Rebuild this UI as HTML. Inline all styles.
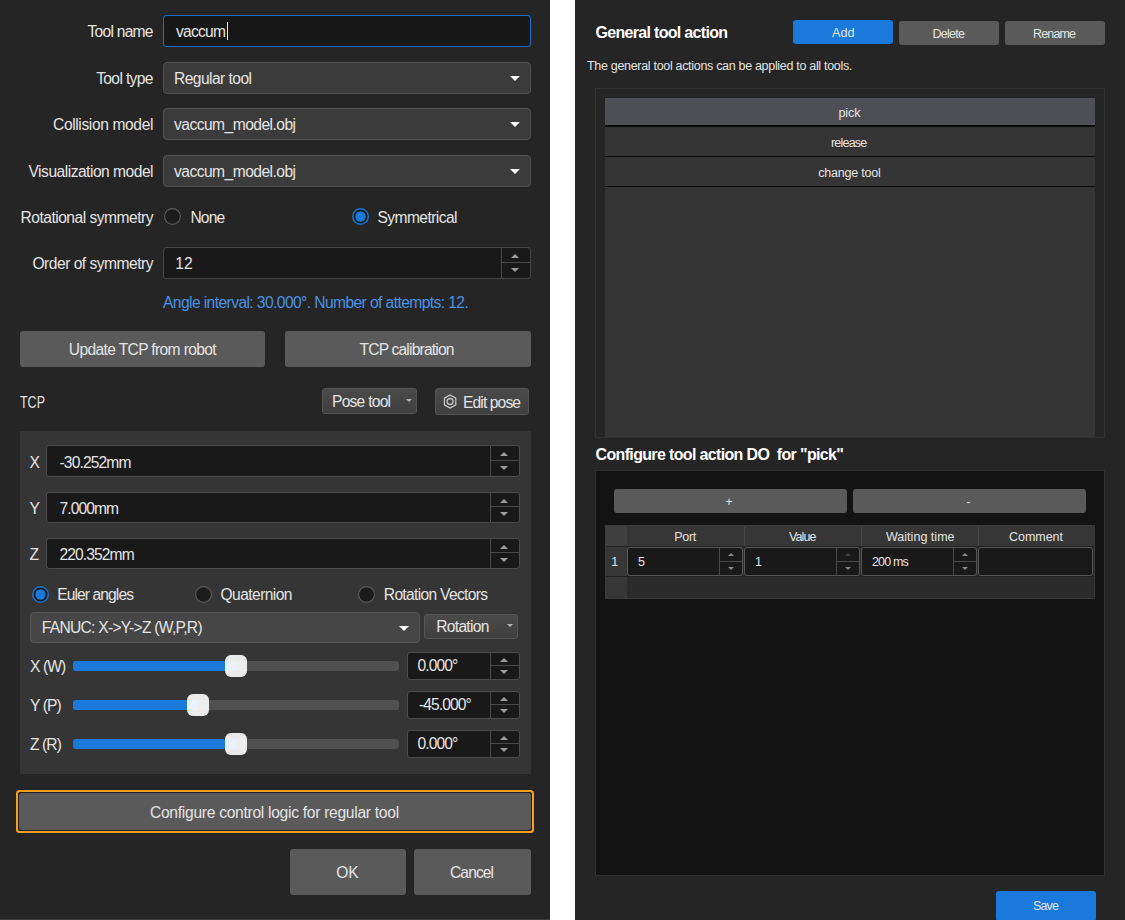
<!DOCTYPE html>
<html lang="en">
<head>
<meta charset="utf-8">
<title>Tool configuration</title>
<style>
*{box-sizing:border-box;margin:0;padding:0}
html,body{width:1125px;height:920px;overflow:hidden;background:#fff}
body{position:relative;font-family:"Liberation Sans",sans-serif;font-size:14px;color:#e4e4e4}
.panel{position:absolute;top:0;background:#252525;overflow:hidden}
#left{left:0;width:550px;height:920px}
#right{left:575px;width:550px;height:920px}
.abs{position:absolute}
.lbl{position:absolute;white-space:pre;height:20px;line-height:20px}
.r{text-align:right}
.input{position:absolute;background:#191919;border:1px solid #464646;border-radius:3px}
.input .t{position:absolute;left:0;top:0;bottom:0;display:flex;align-items:center;white-space:nowrap}
.combo{position:absolute;background:#3b3b3b;border:1px solid #525252;border-radius:4px}
.combo .t{position:absolute;left:10px;top:0;bottom:0;display:flex;align-items:center;white-space:nowrap}
.arrow{position:absolute;width:0;height:0;border-left:5px solid transparent;border-right:5px solid transparent;border-top:5px solid #fff}
.sarrow{position:absolute;width:0;height:0;border-left:3.5px solid transparent;border-right:3.5px solid transparent;border-top:3.5px solid #b4b4b4}
.btn{position:absolute;background:#5a5a5a;border-radius:3px;display:flex;align-items:center;justify-content:center;white-space:nowrap;color:#f2f2f2}
.btn.blue{background:#1a7adb;color:#fff}
.sbtn{position:absolute;background:linear-gradient(#4a4a4a,#3f3f3f);border:1px solid #555;border-radius:3px}
.radio{position:absolute;overflow:visible}
.spin{position:absolute;top:0;bottom:0;right:0;border-left:1px solid #4a4a4a}
.spin::before{content:"";position:absolute;left:0;right:0;top:50%;height:1px;margin-top:-1px;background:#4a4a4a}
.spin i{position:absolute;left:50%;width:0;height:0;margin-left:-5px;border-left:4px solid transparent;border-right:4px solid transparent}
.spin i.u{border-bottom:4px solid #9c9c9c}
.spin i.d{border-top:4px solid #9c9c9c}
.track{position:absolute;height:10px;border-radius:3px;background:#505050}
.fill{position:absolute;left:0;top:0;bottom:0;border-radius:3px;background:#1a7adb}
.knob{position:absolute;border-radius:6px;background:rgba(255,255,255,.9)}
</style>
</head>
<body>
<div class="panel" id="left">
<div class="lbl " style="left:87.5px;top:21.5px;font-size:15.6px;letter-spacing:-0.74px;">Tool name</div>
<div class="lbl " style="left:96.2px;top:68.5px;font-size:15.6px;letter-spacing:-0.65px;">Tool type</div>
<div class="lbl " style="left:53.0px;top:115.0px;font-size:15.6px;letter-spacing:-0.38px;">Collision model</div>
<div class="lbl " style="left:28.5px;top:161.5px;font-size:15.6px;letter-spacing:-0.50px;">Visualization model</div>
<div class="lbl " style="left:20.5px;top:207.5px;font-size:15.6px;letter-spacing:-0.51px;">Rotational symmetry</div>
<div class="lbl " style="left:32.5px;top:253.5px;font-size:15.6px;letter-spacing:-0.51px;">Order of symmetry</div>
<div class="input" style="left:163px;top:15px;width:368px;height:32px;border-color:#1b6fc8;background:#181818;"></div>
<div class="lbl " style="left:176.0px;top:21.5px;font-size:15.6px;letter-spacing:-0.75px;">vaccum</div>
<div class="abs" style="left:227px;top:22px;width:1px;height:18px;background:#e8e8e8;"></div>
<div class="combo" style="left:163px;top:62px;width:368px;height:32px;"><span class="arrow" style="right:10px;top:13px"></span></div>
<div class="lbl " style="left:174.0px;top:68.5px;font-size:15.6px;letter-spacing:-0.55px;">Regular tool</div>
<div class="combo" style="left:163px;top:108px;width:368px;height:32px;"><span class="arrow" style="right:10px;top:13px"></span></div>
<div class="lbl " style="left:174.0px;top:114.5px;font-size:15.6px;letter-spacing:-0.53px;">vaccum_model.obj</div>
<div class="combo" style="left:163px;top:155px;width:368px;height:32px;"><span class="arrow" style="right:10px;top:13px"></span></div>
<div class="lbl " style="left:174.0px;top:161.5px;font-size:15.6px;letter-spacing:-0.53px;">vaccum_model.obj</div>
<svg class="radio" style="left:164.3px;top:208.0px" width="17" height="17" viewBox="0 0 17 17"><circle cx="8.5" cy="8.5" r="7.9" fill="#1b1b1b" stroke="#5a5a5a" stroke-width="1.2"/></svg>
<div class="lbl " style="left:190.5px;top:207.5px;font-size:15.6px;letter-spacing:-0.90px;">None</div>
<svg class="radio" style="left:351.8px;top:208.0px" width="17" height="17" viewBox="0 0 17 17"><circle cx="8.5" cy="8.5" r="7.75" fill="#1b1b1b" stroke="#1b72cc" stroke-width="1.5"/><circle cx="8.5" cy="8.5" r="5.15" fill="#1a7adb"/></svg>
<div class="lbl " style="left:377.5px;top:207.5px;font-size:15.6px;letter-spacing:-0.58px;">Symmetrical</div>
<div class="input" style="left:163px;top:247px;width:368px;height:32px;"><div class="spin" style="width:29px"><i class="u" style="top:6.0px"></i><i class="d" style="top:20.0px"></i></div></div>
<div class="lbl " style="left:175.3px;top:253.5px;font-size:15.6px;">12</div>
<div class="lbl " style="left:163.0px;top:293.0px;font-size:15.6px;letter-spacing:-0.58px;color:#4a92e6;">Angle interval: 30.000°. Number of attempts: 12.</div>
<div class="btn" style="left:20px;top:331px;width:245px;height:36px;"></div>
<div class="lbl " style="left:68.8px;top:340.0px;font-size:15.6px;letter-spacing:-0.64px;">Update TCP from robot</div>
<div class="btn" style="left:285px;top:331px;width:246px;height:36px;"></div>
<div class="lbl " style="left:359.5px;top:340.0px;font-size:15.6px;letter-spacing:-0.81px;">TCP calibration</div>
<div class="lbl " style="transform:scaleX(.8);transform-origin:0 50%;left:19.5px;top:392.5px;font-size:15.6px;">TCP</div>
<div class="sbtn" style="left:322px;top:388px;width:95px;height:26px;"><span class="sarrow" style="right:4px;top:10px"></span></div>
<div class="lbl " style="left:332.0px;top:391.5px;font-size:15.6px;letter-spacing:-0.75px;">Pose tool</div>
<div class="sbtn" style="left:434.5px;top:388px;width:94.79999999999995px;height:27px;"></div>
<div class="lbl " style="left:463.0px;top:392.5px;font-size:15.6px;letter-spacing:-0.88px;">Edit pose</div>
<svg class="abs" style="left:442px;top:393px" width="17" height="17" viewBox="0 0 17 17"><polygon points="8.1,1.9 13.8,5.2 13.8,11.8 8.1,15.1 2.4,11.8 2.4,5.2" fill="none" stroke="#cfcfcf" stroke-width="1.15"/><circle cx="8.1" cy="8.5" r="3" fill="none" stroke="#c4c4c4" stroke-width="1.3"/></svg>
<div class="abs" style="left:20px;top:431px;width:511px;height:343px;background:#353535;"></div>
<div class="lbl " style="left:29.5px;top:452.9px;font-size:15.6px;">X</div>
<div class="input" style="left:46px;top:445.4px;width:473.6px;height:31.400000000000034px;border-color:#4c4c4c;"><div class="spin" style="width:29px"><i class="u" style="top:6.0px"></i><i class="d" style="top:19.4px"></i></div></div>
<div class="lbl " style="left:59.5px;top:452.9px;font-size:15.6px;letter-spacing:-0.86px;">-30.252mm</div>
<div class="lbl " style="left:29.5px;top:499.1px;font-size:15.6px;">Y</div>
<div class="input" style="left:46px;top:491.6px;width:473.6px;height:31.399999999999977px;border-color:#4c4c4c;"><div class="spin" style="width:29px"><i class="u" style="top:6.0px"></i><i class="d" style="top:19.4px"></i></div></div>
<div class="lbl " style="left:59.5px;top:499.1px;font-size:15.6px;letter-spacing:-0.90px;">7.000mm</div>
<div class="lbl " style="left:29.5px;top:545.3px;font-size:15.6px;">Z</div>
<div class="input" style="left:46px;top:537.8px;width:473.6px;height:31.40000000000009px;border-color:#4c4c4c;"><div class="spin" style="width:29px"><i class="u" style="top:6.0px"></i><i class="d" style="top:19.4px"></i></div></div>
<div class="lbl " style="left:59.5px;top:545.3px;font-size:15.6px;letter-spacing:-0.90px;">220.352mm</div>
<svg class="radio" style="left:31.5px;top:585.8px" width="17" height="17" viewBox="0 0 17 17"><circle cx="8.5" cy="8.5" r="7.75" fill="#1b1b1b" stroke="#1b72cc" stroke-width="1.5"/><circle cx="8.5" cy="8.5" r="5.15" fill="#1a7adb"/></svg>
<div class="lbl " style="left:57.2px;top:585.0px;font-size:15.6px;letter-spacing:-0.90px;">Euler angles</div>
<svg class="radio" style="left:194.5px;top:585.8px" width="17" height="17" viewBox="0 0 17 17"><circle cx="8.5" cy="8.5" r="7.9" fill="#1b1b1b" stroke="#5a5a5a" stroke-width="1.2"/></svg>
<div class="lbl " style="left:220.5px;top:585.0px;font-size:15.6px;letter-spacing:-0.57px;">Quaternion</div>
<svg class="radio" style="left:357.8px;top:585.8px" width="17" height="17" viewBox="0 0 17 17"><circle cx="8.5" cy="8.5" r="7.9" fill="#1b1b1b" stroke="#5a5a5a" stroke-width="1.2"/></svg>
<div class="lbl " style="left:383.8px;top:585.0px;font-size:15.6px;letter-spacing:-0.68px;">Rotation Vectors</div>
<div class="combo" style="left:30px;top:612px;width:390px;height:31px;background:#464646;border-color:#585858;"><span class="arrow" style="right:10px;top:13px"></span></div>
<div class="lbl " style="left:41.8px;top:618.0px;font-size:15.6px;letter-spacing:-0.72px;">FANUC: X-&gt;Y-&gt;Z (W,P,R)</div>
<div class="sbtn" style="left:424px;top:614px;width:94px;height:25px;"><span class="sarrow" style="right:4px;top:8.5px"></span></div>
<div class="lbl " style="left:436.2px;top:617.0px;font-size:15.6px;letter-spacing:-0.69px;">Rotation</div>
<div class="lbl " style="left:30.0px;top:657.0px;font-size:15.6px;letter-spacing:-0.90px;">X (W)</div>
<div class="track" style="left:73px;top:660.5px;width:326px;height:10.0px;"><div class="fill" style="width:162.9px"></div></div>
<div class="knob" style="left:224.9px;top:654.6px;width:22.30000000000001px;height:22.299999999999955px;"></div>
<div class="input" style="left:406.5px;top:651.5px;width:113.0px;height:28.5px;border-color:#4c4c4c;"><div class="spin" style="width:29px"><i class="u" style="top:5.3px"></i><i class="d" style="top:17.5px"></i></div></div>
<div class="lbl " style="left:417.5px;top:656.0px;font-size:15.6px;letter-spacing:-0.90px;">0.000°</div>
<div class="lbl " style="left:30.0px;top:696.0px;font-size:15.6px;letter-spacing:-0.90px;">Y (P)</div>
<div class="track" style="left:73px;top:699.5px;width:326px;height:10.0px;"><div class="fill" style="width:125.1px"></div></div>
<div class="knob" style="left:187.1px;top:693.6px;width:22.30000000000001px;height:22.299999999999955px;"></div>
<div class="input" style="left:406.5px;top:690.5px;width:113.0px;height:28.5px;border-color:#4c4c4c;"><div class="spin" style="width:29px"><i class="u" style="top:5.3px"></i><i class="d" style="top:17.5px"></i></div></div>
<div class="lbl " style="left:419.0px;top:695.0px;font-size:15.6px;letter-spacing:-0.90px;">-45.000°</div>
<div class="lbl " style="left:30.0px;top:735.0px;font-size:15.6px;letter-spacing:-0.90px;">Z (R)</div>
<div class="track" style="left:73px;top:738.5px;width:326px;height:10.0px;"><div class="fill" style="width:162.9px"></div></div>
<div class="knob" style="left:224.9px;top:732.6px;width:22.30000000000001px;height:22.299999999999955px;"></div>
<div class="input" style="left:406.5px;top:729.5px;width:113.0px;height:28.5px;border-color:#4c4c4c;"><div class="spin" style="width:29px"><i class="u" style="top:5.3px"></i><i class="d" style="top:17.5px"></i></div></div>
<div class="lbl " style="left:417.5px;top:734.0px;font-size:15.6px;letter-spacing:-0.90px;">0.000°</div>
<div class="abs" style="left:16px;top:789.8px;width:518px;height:43.200000000000045px;border-radius:3.5px;background:#f89f1e;"></div>
<div class="abs" style="left:18.35px;top:792.15px;width:513.3px;height:38.5px;border-radius:2px;background:#1d2026;"></div>
<div class="btn" style="left:19px;top:793px;width:512px;height:37px;"></div>
<div class="lbl " style="left:150.0px;top:802.5px;font-size:15.6px;letter-spacing:-0.28px;">Configure control logic for regular tool</div>
<div class="btn" style="left:290px;top:849px;width:116px;height:46px;"></div>
<div class="lbl " style="left:336.2px;top:863.0px;font-size:15.6px;">OK</div>
<div class="btn" style="left:414px;top:849px;width:117px;height:46px;"></div>
<div class="lbl " style="left:450.0px;top:863.0px;font-size:15.6px;letter-spacing:-0.90px;">Cancel</div>
<div class="abs" style="left:0px;top:919px;width:550px;height:1px;background:#3e3e3e;"></div>

</div>
<div class="panel" id="right">
<div class="lbl " style="left:20.5px;top:23.0px;font-size:16px;letter-spacing:-0.69px;font-weight:700;color:#fff;">General tool action</div>
<div class="btn blue" style="left:218px;top:20px;width:100px;height:24px;"></div>
<div class="lbl " style="left:257.1px;top:23.0px;font-size:12.5px;">Add</div>
<div class="btn" style="left:324px;top:21px;width:100px;height:24px;"></div>
<div class="lbl " style="left:357.5px;top:24.0px;font-size:12.5px;letter-spacing:-0.73px;">Delete</div>
<div class="btn" style="left:430px;top:21px;width:100px;height:24px;"></div>
<div class="lbl " style="left:458.0px;top:24.0px;font-size:12.5px;letter-spacing:-0.85px;">Rename</div>
<div class="lbl " style="left:12.0px;top:55.5px;font-size:12.5px;letter-spacing:-0.31px;">The general tool actions can be applied to all tools.</div>
<div class="abs" style="left:20px;top:88px;width:510px;height:350px;border:1px solid #313131;"></div>
<div class="abs" style="left:30px;top:98px;width:489.5px;height:339.3px;background:#353535;"></div>
<div class="abs" style="left:30px;top:98px;width:489.5px;height:27.5px;background:#4e4f54;"></div>
<div class="abs" style="left:30px;top:125.4px;width:489.5px;height:1.1999999999999886px;background:#080808;"></div>
<div class="lbl " style="left:263.5px;top:102.5px;font-size:12.5px;letter-spacing:-0.11px;">pick</div>
<div class="abs" style="left:30px;top:155.8px;width:489.5px;height:1.1999999999999886px;background:#080808;"></div>
<div class="lbl " style="left:256.0px;top:132.6px;font-size:12.5px;letter-spacing:-0.80px;">release</div>
<div class="abs" style="left:30px;top:185.8px;width:489.5px;height:1.1999999999999886px;background:#080808;"></div>
<div class="lbl " style="left:243.3px;top:162.7px;font-size:12.5px;letter-spacing:-0.22px;">change tool</div>
<div class="lbl " style="left:20.5px;top:445.0px;font-size:16px;letter-spacing:-0.65px;font-weight:700;color:#fff;">Configure tool action DO  for "pick"</div>
<div class="abs" style="left:20px;top:470px;width:510px;height:406px;background:#131313;border:1px solid #303030;"></div>
<div class="btn" style="left:39px;top:489px;width:233px;height:24px;"></div>
<div class="lbl " style="left:150.5px;top:492.0px;font-size:12px;">+</div>
<div class="btn" style="left:278px;top:489px;width:233px;height:24px;"></div>
<div class="lbl " style="left:391.5px;top:492.0px;font-size:12px;">-</div>
<div class="abs" style="left:30px;top:525px;width:490px;height:74px;background:#2b2b2b;border:1px solid #3a3a3a;"></div>
<div class="abs" style="left:31px;top:526px;width:488px;height:20px;background:#363636;"></div>
<div class="abs" style="left:31px;top:526px;width:21px;height:20px;background:#404040;"></div>
<div class="abs" style="left:31px;top:547px;width:21px;height:51px;background:#363636;"></div>
<div class="abs" style="left:31px;top:546px;width:488px;height:1px;background:#222;"></div>
<div class="abs" style="left:31px;top:576px;width:488px;height:1px;background:#222;"></div>
<div class="lbl " style="left:99.3px;top:526.5px;font-size:12.5px;letter-spacing:-0.31px;">Port</div>
<div class="abs" style="left:169px;top:527px;width:1px;height:19px;background:#484848;"></div>
<div class="lbl " style="left:214.0px;top:526.5px;font-size:12.5px;letter-spacing:-0.89px;">Value</div>
<div class="abs" style="left:286px;top:527px;width:1px;height:19px;background:#484848;"></div>
<div class="lbl " style="left:311.0px;top:526.5px;font-size:12.5px;letter-spacing:0.02px;">Waiting time</div>
<div class="abs" style="left:403px;top:527px;width:1px;height:19px;background:#484848;"></div>
<div class="lbl " style="left:434.0px;top:526.5px;font-size:12.5px;letter-spacing:-0.03px;">Comment</div>
<div class="lbl " style="left:36.2px;top:552.2px;font-size:12.5px;">1</div>
<div class="input" style="left:52px;top:547px;width:116px;height:29px;border-color:#565656;"><div class="spin" style="width:23px"><i style="top:5.2px;margin-left:-3.5px;border-left:3.3px solid transparent;border-right:3.3px solid transparent;border-bottom:3.3px solid #8c8c8c"></i><i style="top:18.6px;margin-left:-3.5px;border-left:3.3px solid transparent;border-right:3.3px solid transparent;border-top:3.3px solid #8c8c8c"></i></div></div>
<div class="lbl " style="left:62.9px;top:551.5px;font-size:12.5px;">5</div>
<div class="input" style="left:169px;top:547px;width:116px;height:29px;border-color:#565656;"><div class="spin" style="width:23px"><i style="top:5.2px;margin-left:-3.5px;border-left:3.3px solid transparent;border-right:3.3px solid transparent;border-bottom:3.3px solid #3c3c3c"></i><i style="top:18.6px;margin-left:-3.5px;border-left:3.3px solid transparent;border-right:3.3px solid transparent;border-top:3.3px solid #8c8c8c"></i></div></div>
<div class="lbl " style="left:180.0px;top:551.5px;font-size:12.5px;">1</div>
<div class="input" style="left:286px;top:547px;width:116px;height:29px;border-color:#565656;"><div class="spin" style="width:23px"><i style="top:5.2px;margin-left:-3.5px;border-left:3.3px solid transparent;border-right:3.3px solid transparent;border-bottom:3.3px solid #8c8c8c"></i><i style="top:18.6px;margin-left:-3.5px;border-left:3.3px solid transparent;border-right:3.3px solid transparent;border-top:3.3px solid #8c8c8c"></i></div></div>
<div class="lbl " style="left:297.0px;top:551.5px;font-size:12.5px;letter-spacing:-0.85px;">200 ms</div>
<div class="input" style="left:403px;top:547px;width:115px;height:29px;border-color:#565656;"></div>
<div class="btn blue" style="left:421px;top:891px;width:100px;height:30px;"></div>
<div class="lbl " style="left:458.1px;top:896.0px;font-size:12.5px;letter-spacing:-0.90px;">Save</div>

</div>
</body>
</html>
